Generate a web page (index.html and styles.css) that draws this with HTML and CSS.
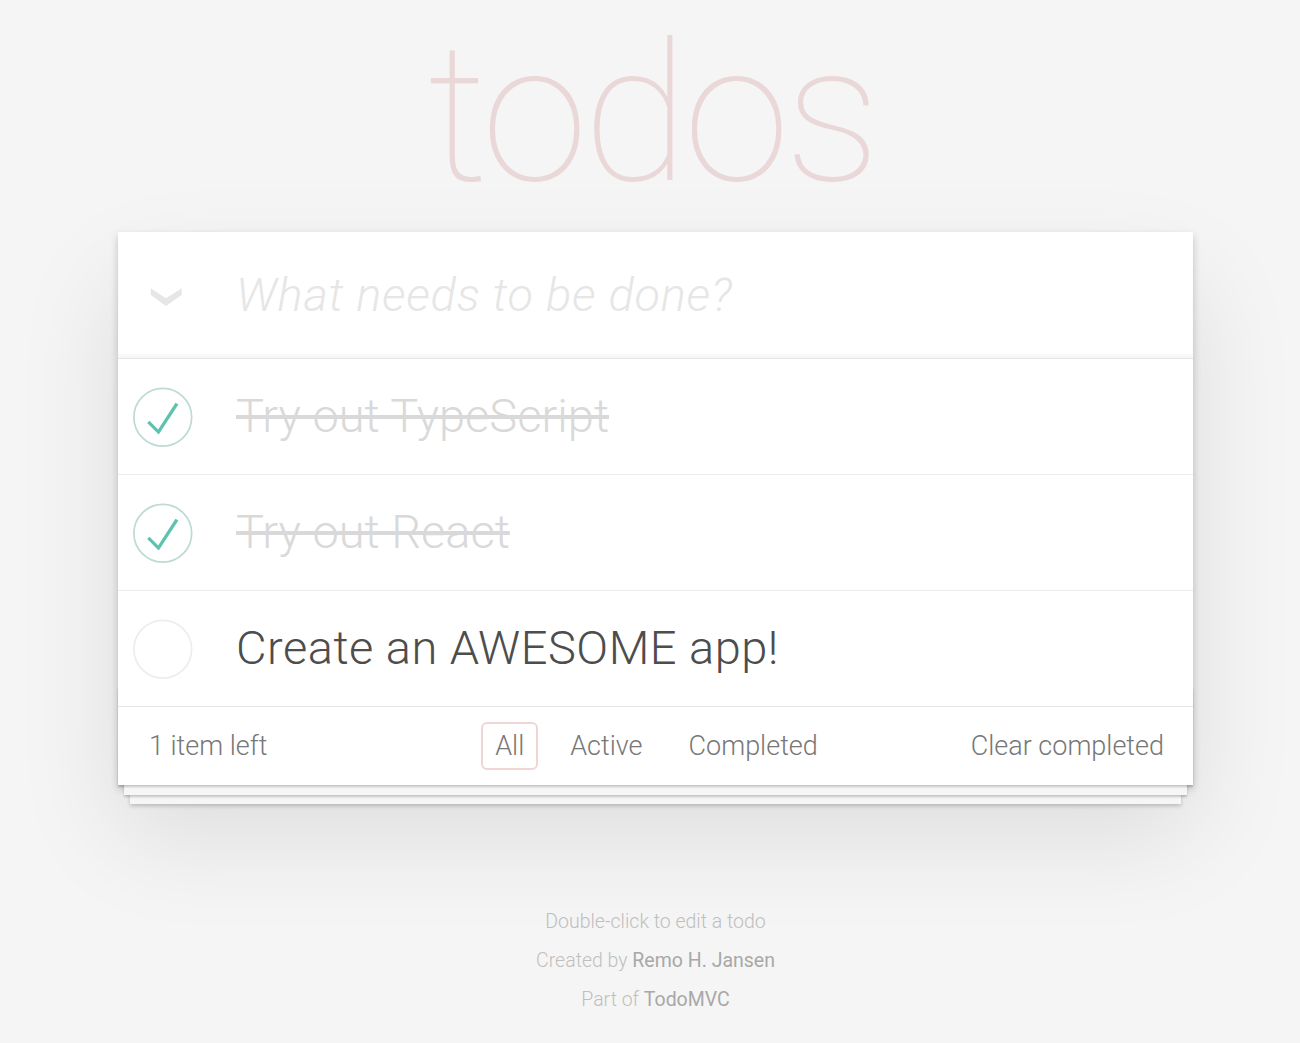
FILE: index.html
```html
<!DOCTYPE html>
<html lang="en">
<head>
<meta charset="utf-8">
<title>TodoMVC</title>
<link rel="stylesheet" href="styles.css">
</head>
<body>
<div class="page">
  <section class="todoapp">
    <h1 class="title">todos</h1>
    <div class="card">
      <header class="new-todo">
        <svg class="toggle-all" width="118" height="26" viewBox="0 0 118 26" aria-hidden="true">
          <polygon points="32.7,6.3 32.7,13 48,24 63.7,13 63.7,6.3 48,16.3" fill="#e6e6e6"/>
        </svg>
        <div class="placeholder">What needs to be done?</div>
      </header>
      <ul class="todo-list">
        <li class="todo completed">
          <svg class="toggle" width="78" height="78" viewBox="-10 -18 100 135" aria-hidden="true">
            <circle cx="50" cy="50" r="50" fill="none" stroke="#bddad5" stroke-width="3"/>
            <path fill="#5dc2af" d="M72 25L42 71 27 56l-4 4 20 20 34-52z"/>
          </svg>
          <span class="label">Try out TypeScript</span>
        </li>
        <li class="todo completed">
          <svg class="toggle" width="78" height="78" viewBox="-10 -18 100 135" aria-hidden="true">
            <circle cx="50" cy="50" r="50" fill="none" stroke="#bddad5" stroke-width="3"/>
            <path fill="#5dc2af" d="M72 25L42 71 27 56l-4 4 20 20 34-52z"/>
          </svg>
          <span class="label">Try out React</span>
        </li>
        <li class="todo">
          <svg class="toggle" width="78" height="78" viewBox="-10 -18 100 135" aria-hidden="true">
            <circle cx="50" cy="50" r="50" fill="none" stroke="#ededed" stroke-width="3"/>
          </svg>
          <span class="label label-active">Create an AWESOME app!</span>
        </li>
      </ul>
      <footer class="footer">
        <span class="count">1 item left</span>
        <ul class="filters">
          <li><a class="filter selected">All</a></li>
          <li><a class="filter">Active</a></li>
          <li><a class="filter">Completed</a></li>
        </ul>
        <button class="clear">Clear completed</button>
      </footer>
    </div>
  </section>
  <footer class="info">
    <p>Double-click to edit a todo</p>
    <p>Created by <a class="info-link">Remo H. Jansen</a></p>
    <p>Part of <a class="info-link">TodoMVC</a></p>
  </footer>
</div>
</body>
</html>
```

FILE: styles.css
```css
html, body {
  margin: 0;
  padding: 0;
}

body {
  background: #f5f5f5;
  color: #4d4d4d;
  font-family: Roboto, "Liberation Sans", Arial, sans-serif;
  font-weight: 300;
}

.page {
  width: 1075px;
  margin-left: 118px;
}

.title {
  margin: 0;
  padding-top: 18px;
  height: 192px;
  font-family: Roboto, "Liberation Sans", sans-serif;
  font-weight: 100;
  font-size: 193px;
  line-height: 1;
  text-align: center;
  color: rgba(175, 47, 47, 0.15);
  letter-spacing: -5px;
  text-indent: -8px;
}

.card {
  margin-top: 22px;
  background: #fff;
  position: relative;
  box-shadow: 0 4px 8px 0 rgba(0, 0, 0, 0.2), 0 49px 98px 0 rgba(0, 0, 0, 0.1);
}

.new-todo {
  display: flex;
  align-items: center;
  height: 126px;
  box-shadow: inset 0 -4px 2px rgba(0, 0, 0, 0.03);
  border-bottom: 1px solid #e6e6e6;
}

.toggle-all {
  flex: none;
  display: block;
}

.placeholder {
  font-size: 47px;
  font-style: italic;
  color: #e6e6e6;
  line-height: 1.4;
  letter-spacing: 0.75px;
}

.todo-list {
  list-style: none;
  margin: 0;
  padding: 0;
}

.todo {
  display: flex;
  align-items: center;
  height: 115px;
  border-bottom: 1px solid #ededed;
}

.todo:last-child {
  border-bottom: none;
}

.toggle {
  flex: none;
  display: block;
}

.label {
  margin-left: 40px;
  font-size: 47px;
  line-height: 1.2;
  color: #4d4d4d;
}

.label-active {
  letter-spacing: 0.5px;
}

.completed .label {
  color: #d9d9d9;
  text-decoration: line-through;
}

.footer {
  position: relative;
  display: grid;
  grid-template-columns: 1fr auto 1fr;
  align-items: center;
  height: 78px;
  padding: 0 29px 0 31px;
  border-top: 1px solid #e6e6e6;
  font-size: 27px;
  color: #777;
}

.footer::before {
  content: "";
  position: absolute;
  right: 0;
  bottom: 0;
  left: 0;
  height: 98px;
  overflow: hidden;
  box-shadow: 0 2px 2px rgba(0, 0, 0, 0.2),
    0 16px 0 -6px #f6f6f6,
    0 18px 2px -6px rgba(0, 0, 0, 0.2),
    0 31px 0 -12px #f6f6f6,
    0 33px 4px -12px rgba(0, 0, 0, 0.2);
  pointer-events: none;
}

.count {
  position: relative;
}

.filters {
  position: relative;
  display: flex;
  list-style: none;
  margin: 0;
  padding: 0;
}

.filters li {
  margin: 0 9px;
}

.filter {
  display: block;
  padding: 6px 12px;
  border: 2px solid transparent;
  border-radius: 6px;
  color: inherit;
  text-decoration: none;
}

.filter.selected {
  border-color: rgba(175, 47, 47, 0.2);
}

.clear {
  position: relative;
  justify-self: end;
  margin: 0;
  padding: 0;
  border: 0;
  background: none;
  font: inherit;
  color: inherit;
}

.info {
  margin-top: 127px;
  text-align: center;
  font-size: 19.5px;
  line-height: 1;
  color: #bfbfbf;
}

.info p {
  margin: 19.5px 0;
}

.info-link {
  color: #a8a8a8;
  font-weight: 400;
}
```
